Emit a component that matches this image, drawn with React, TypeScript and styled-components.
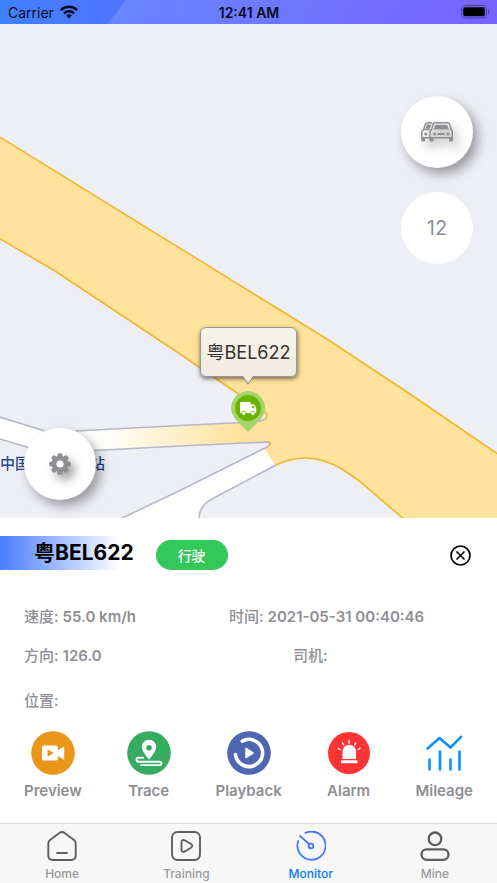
import React from "react";
import styled, { createGlobalStyle } from "styled-components";

const GlobalStyle = createGlobalStyle`
  * { box-sizing: border-box; }
  body {
    margin: 0;
    background: #fff;
    font-family: Inter, "Noto Sans CJK SC", sans-serif;
  }
  button { font: inherit; border: 0; padding: 0; background: none; cursor: pointer; }
  svg { display: block; }
`;

const Screen = styled.div`
  min-height: 100vh;
  display: flex;
  flex-direction: column;
`;

/* ---------- status bar ---------- */

const StatusBar = styled.header`
  height: 24px;
  padding: 0 7px 0 8px;
  display: grid;
  grid-template-columns: 1fr auto 1fr;
  align-items: center;
  background:
    linear-gradient(127deg, transparent 100px, rgba(255, 255, 255, 0.13) 101px, transparent 460px),
    linear-gradient(90deg, #3f80ff, #5472ff 30%, #765fff);
  color: #0b0b1c;
`;

const Carrier = styled.div`
  display: flex;
  align-items: center;
  gap: 6px;
  font-size: 14px;
`;

const Clock = styled.time`
  font-size: 14px;
  font-weight: 600;
`;

const Battery = styled.svg`
  justify-self: end;
`;

/* ---------- map ---------- */

const MapArea = styled.main`
  position: relative;
  flex: 1;
  min-height: 440px;
  overflow: hidden;
  background: #eeeff5;
`;

const MapCanvas = styled.svg`
  position: absolute;
  inset: 0;
  width: 100%;
  height: 100%;
`;

const FloatingStack = styled.div`
  position: absolute;
  top: 72px;
  right: 24px;
  display: flex;
  flex-direction: column;
  gap: 24px;
`;

const RoundButton = styled.button<{ $raised?: boolean }>`
  width: 72px;
  height: 72px;
  border-radius: 50%;
  display: flex;
  align-items: center;
  justify-content: center;
  background: #fff;
  color: #8e8e93;
  font-size: 20px;
  box-shadow: ${(p) => (p.$raised ? "5px 6px 12px rgba(0, 0, 0, 0.36)" : "none")};
  svg {
    filter: drop-shadow(5px 6px 5px rgba(0, 0, 0, 0.36));
  }
`;

const SettingsSlot = styled.div`
  position: absolute;
  left: 24px;
  bottom: 18px;
`;

const VehicleMarker = styled.div`
  position: absolute;
  top: 303px;
  left: 50%;
  transform: translateX(-50%);
  display: flex;
  flex-direction: column;
  align-items: center;
  gap: 5px;
`;

const Callout = styled.div`
  position: relative;
  height: 50px;
  margin-bottom: 9px;
  padding: 0 6px 3px;
  display: flex;
  align-items: center;
  border: 1px solid #98968f;
  border-radius: 6px;
  background: linear-gradient(#f6f3e9, #efebe0);
  box-shadow: 0 2px 4px rgba(0, 0, 0, 0.5);
  color: #333;
  font-size: 18px;
  white-space: nowrap;
`;

const CalloutTip = styled.svg`
  position: absolute;
  top: 100%;
  left: 50%;
  transform: translateX(-50%);
  margin-top: -1px;
`;

/* ---------- vehicle panel ---------- */

const Panel = styled.section`
  padding-top: 18px;
  background: #fff;
`;

const PanelHeader = styled.div`
  height: 38px;
  padding-right: 26px;
  display: flex;
  align-items: center;
`;

const Plate = styled.h1`
  align-self: flex-start;
  margin: 0;
  padding-left: 34px;
  font-size: 21px;
  line-height: 34px;
  font-weight: 700;
  color: #000;
  background: linear-gradient(90deg, #4b7cff, rgba(75, 124, 255, 0)) 0 0 / 120px 100% no-repeat;
`;

const StatusPill = styled.span`
  width: 72px;
  height: 30px;
  margin-left: 22px;
  border-radius: 15px;
  display: flex;
  align-items: center;
  justify-content: center;
  background: #34c759;
  color: #fff;
  font-size: 14px;
  font-weight: 500;
`;

const CloseButton = styled.button`
  margin-left: auto;
`;

const Facts = styled.dl`
  margin: 33px 24px 20px;
  display: grid;
  grid-template-columns: 205px 1fr;
  row-gap: 19px;
`;

const Fact = styled.div<{ $indent?: boolean; $spaced?: boolean }>`
  display: flex;
  gap: 4px;
  padding-left: ${(p) => (p.$indent ? "64px" : "0")};
  padding-top: ${(p) => (p.$spaced ? "6px" : "0")};
  color: #8e8e93;
  font-size: 15px;
  line-height: 20px;
  white-space: nowrap;
  dt { font-weight: 500; }
  dd { margin: 0; font-weight: 600; }
`;

const Actions = styled.div`
  padding: 0 24px 22px;
  display: flex;
  justify-content: space-between;
`;

const ActionButton = styled.button`
  display: flex;
  flex-direction: column;
  align-items: center;
  gap: 6px;
  color: #8e8e93;
  font-size: 15px;
  line-height: 20px;
  font-weight: 600;
`;

/* ---------- tab bar ---------- */

const TabBar = styled.nav`
  height: 60px;
  display: flex;
  border-top: 1px solid #dcdcdc;
  background: #f7f7f7;
`;

const Tab = styled.a<{ $active?: boolean }>`
  flex: 1;
  padding-top: 7px;
  display: flex;
  flex-direction: column;
  align-items: center;
  gap: 5px;
  text-decoration: none;
  color: ${(p) => (p.$active ? "#007aff" : "#999")};
  font-size: 12px;
  line-height: 16px;
  font-weight: 500;
`;

/* ---------- drawings ---------- */

const WifiIcon = () => (
  <svg width="18" height="14" viewBox="0 0 18 14" fill="none" stroke="#08081a" strokeWidth="2.4" aria-hidden="true">
    <path d="M.9 5.1a11.5 11.5 0 0 1 16.2 0" />
    <path d="M4 8.3a7.2 7.2 0 0 1 10 0" />
    <path d="M9 13.4 6.2 10.6a4 4 0 0 1 5.6 0z" fill="#08081a" stroke="none" />
  </svg>
);

const BatteryIcon = () => (
  <Battery width="29" height="14" viewBox="0 0 29 14" aria-label="Battery full">
    <rect x="0.5" y="0.5" width="25" height="12.5" rx="3.5" fill="none" stroke="#4a409b" />
    <rect x="2.2" y="2.2" width="21.6" height="9.1" rx="2" fill="#000" />
    <path d="M27 4.6v4.4c1-.3 1.5-1.2 1.5-2.2S28 4.9 27 4.6z" fill="#4a409b" />
  </Battery>
);

const RoadMap = () => (
  <MapCanvas viewBox="0 24 497 494" preserveAspectRatio="xMidYMid slice" aria-hidden="true">
    <defs>
      <linearGradient id="ramp" gradientUnits="userSpaceOnUse" x1="95" y1="0" x2="240" y2="0">
        <stop offset="0" stopColor="#fff" />
        <stop offset="0.12" stopColor="#fffdf8" />
        <stop offset="1" stopColor="#ffe29b" />
      </linearGradient>
    </defs>
    <path d="M-5 415.5 45 431Q58 434 78 431L270 420V442L95 450Q60 458 30 448L-5 437z" fill="url(#ramp)" />
    <path d="M266 448 180 490 122 518V525H199V514Q199 506 212 499L276 465z" fill="#fff" />
    <path
      d="M-5 134 280 310 330 341 410 394 502 457V523H408L403 518 358 480 342 469Q322 457.5 304 458 290 460 275 465L265 449Q271 445 270 442L240 441V422L262 420Q268 419 267 415L255 405 240 395 180 354 55 271-5 236z"
      fill="#ffe29b"
    />
    <g fill="none" stroke="#b5b8c9" strokeWidth="1.6">
      <path d="M-5 415.5 45 431M76 431 180 425.5 255 422Q262 421 265 419" />
      <path d="M-5 437.5 30 448M94 450.5 180 446 268 442Q271 444 268 446.5L180 490.5 120 519" />
      <path d="M276 465 212 499Q199 506 199 519" />
    </g>
    <g fill="none" stroke="#f0b52f" strokeWidth="1.6">
      <path d="M-5 134 280 310 330 341 410 394 502 457" />
      <path d="M-5 236 55 271 180 354 240 395 264 411Q269 415 265 419.5" />
      <path d="M268 442Q272 442 269 446" />
      <path d="M276 465Q290 458.5 304 458 322 457.5 342 469L358 480 405 520" />
    </g>
    <text x="0" y="469" fontSize="15" fontWeight="500" fill="#24458f" stroke="#fff" strokeWidth="1" paintOrder="stroke">
      中国石化加油站
    </text>
  </MapCanvas>
);

const CarsIcon = () => (
  <svg width="32" height="20" viewBox="0 0 32 20" fill="none" stroke="#8e8e93" strokeWidth="1.5" aria-hidden="true">
    <path d="M11.5.8H6.5Q4.8.8 4.2 2.5L2.6 7.600Q.8 8.6.8 10.5V15.8H9.200M3 7.6H8.8" />
    <path d="M5.8 2.6H10.3L8.7 6.8H4.4z" fill="#8e8e93" stroke="none" />
    <circle cx="4.7" cy="12" r="1.5" fill="#8e8e93" stroke="none" />
    <path d="M.2 16h3.800v2.600q0 1-1 1H1.200q-1 0-1-1z" fill="#8e8e93" stroke="none" />
    <path d="M14 .8H26.4Q28.1.8 28.7 2.5L30.2 7.6Q31.3 8.6 31.300 10.500V15.8H9V10.500Q9 8.6 10.600 7.6L12 2.500Q12.5.8 14 .8z" />
    <path d="M14.300 2.700H26.200L27.900 7.500H12.600z" fill="#8e8e93" stroke="none" />
    <circle cx="13.500" cy="12" r="1.5" fill="#8e8e93" stroke="none" />
    <circle cx="27" cy="12" r="1.5" fill="#8e8e93" stroke="none" />
    <rect x="16.4" y="11" width="7.4" height="2" rx="1" fill="#8e8e93" stroke="none" />
    <path d="M8.500 16h4v2.600q0 1-1 1h-2q-1 0-1-1zM28 16h4v2.600q0 1-1 1h-2q-1 0-1-1z" fill="#8e8e93" stroke="none" />
  </svg>
);

const GearIcon = () => (
  <svg width="22" height="22" viewBox="-11 -11 22 22" aria-hidden="true">
    <g fill="#8e8e93">
      {[0, 45, 90, 135].map((a) => (
        <rect key={a} x="-2.4" y="-10.7" width="4.8" height="21.4" rx="1.5" transform={`rotate(${a})`} />
      ))}
      <circle r="8.3" />
    </g>
    <circle r="3.6" fill="#fff" />
  </svg>
);

const TruckPin = () => (
  <svg width="34" height="41" viewBox="0 0 34 41" aria-hidden="true">
    <path d="M17 0a17 17 0 0 1 12.5 28.5L17 41 4.5 28.5A17 17 0 0 1 17 0z" fill="#a5d46a" />
    <circle cx="17" cy="17" r="13" fill="#6ab400" />
    <path
      d="M10 11h8.8q1 0 1 1v1.300h2.400q.6 0 1 .5l1.500 2.400q.5.6.5 1.300v3.800q0 .8-.8.8H9.800q-.8 0-.8-.8V12q0-1 1-1z"
      fill="#fff"
    />
    <path d="M21 14.600h1.200l1.500 2.600H21z" fill="#6ab400" />
    <g fill="#fff" stroke="#6ab400" strokeWidth="0.8">
      <circle cx="12.8" cy="22.3" r="2.1" />
      <circle cx="21.8" cy="22.3" r="2.1" />
    </g>
  </svg>
);

const CloseIcon = () => (
  <svg width="21" height="21" viewBox="0 0 21 21" fill="none" stroke="#000" strokeWidth="1.7" strokeLinecap="round" aria-hidden="true">
    <circle cx="10.5" cy="10.5" r="9.5" />
    <path d="m7 7 7 7M14 7l-7 7" />
  </svg>
);

const PreviewIcon = () => (
  <svg width="44" height="44" viewBox="0 0 44 44" aria-hidden="true">
    <circle cx="22" cy="22" r="21.8" fill="#ea961a" />
    <path d="M13 14.5H25q2 0 2 2v2.800l5.500-3.500q.7-.3.7.5V28q0 .8-.7.5L27 25v2.600q0 2-2 2H13q-2 0-2-2V16.500q0-2 2-2z" fill="#fff" />
    <path d="M17 19v6l5-3z" fill="#ea961a" stroke="#ea961a" strokeWidth="1" strokeLinejoin="round" />
  </svg>
);

const TraceIcon = () => (
  <svg width="44" height="44" viewBox="0 0 44 44" aria-hidden="true">
    <circle cx="22" cy="22" r="21.8" fill="#36ac60" />
    <path d="M22 28.500Q14.700 20 14.700 16a7.300 7.300 0 0 1 14.600 0Q29.300 20 22 28.500z" fill="#fff" />
    <circle cx="22" cy="16.8" r="2.8" fill="#36ac60" />
    <path d="M16 26.800H11.500a2 2 0 0 0 0 4H33q1.500.3 1.500 1.700T33 34.100H14" fill="none" stroke="#fff" strokeWidth="1.900" strokeLinecap="round" />
  </svg>
);

const PlaybackIcon = () => (
  <svg width="44" height="44" viewBox="0 0 44 44" aria-hidden="true">
    <circle cx="22" cy="22" r="21.8" fill="#4f67b0" />
    <path d="M15.200 10.200A13.600 13.600 0 1 1 8.500 23.500" fill="none" stroke="#fff" strokeWidth="3.600" strokeLinecap="round" />
    <path d="M19 17.500v9l7-4.500z" fill="#fff" stroke="#fff" strokeWidth="1.500" strokeLinejoin="round" />
  </svg>
);

const AlarmIcon = () => (
  <svg width="44" height="44" viewBox="0 0 44 44" aria-hidden="true">
    <circle cx="22" cy="22" r="21" fill="#fd3334" />
    <path d="M15.500 28V20.500a6.500 6.500 0 0 1 13.500 0V28z" fill="#fff" />
    <rect x="14" y="29.300" width="16.500" height="2.900" rx=".6" fill="#fff" />
    <path d="m11.300 17.300 1.800 1.200M15.500 12l1.200 1.800M22 9.600V12M28.800 12l-1.200 1.800M33 17.300l-1.800 1.200" stroke="#fff" strokeWidth="1.400" strokeLinecap="round" />
  </svg>
);

const MileageIcon = () => (
  <svg width="44" height="44" viewBox="0 0 44 44" fill="none" stroke="#0a92fa" strokeWidth="2.6" strokeLinecap="round" aria-hidden="true">
    <path d="M5.500 17.500 17.500 7 28.500 16.500 39 5.800" strokeLinejoin="round" />
    <path d="M7.500 28.500V38.500M18 20.500v18M28.500 28.500v10M37.500 20.500v18" />
  </svg>
);

const HomeIcon = () => (
  <svg width="30" height="30" viewBox="0 0 30 30" fill="none" stroke="#5f5f5f" strokeWidth="1.9" strokeLinecap="round" aria-hidden="true">
    <path d="M13 1.600q2-1.300 4 0L27 9q1.700 1.400 1.700 3.500V24.500q0 4.500-4.500 4.500H5.800q-4.500 0-4.500-4.500V12.500Q1.300 10.400 3 9z" />
    <path d="M10 22h10" />
  </svg>
);

const TrainingIcon = () => (
  <svg width="30" height="30" viewBox="0 0 30 30" fill="none" stroke="#5f5f5f" strokeWidth="1.9" strokeLinejoin="round" aria-hidden="true">
    <rect x="1" y="1" width="28" height="28" rx="5.500" />
    <path d="M10.500 11.500q0-3.500 3.200-2.200L20 13q2.500 1.800 0 3.700L13.700 20.500q-3.200 1.300-3.200-2z" />
  </svg>
);

const MonitorIcon = () => (
  <svg width="30" height="30" viewBox="0 0 30 30" fill="none" stroke="#4477f5" strokeWidth="1.8" strokeLinecap="round" aria-hidden="true">
    <path d="M9.500 1.900A14.100 14.100 0 1 1 2.200 10" />
    <path d="M4 4.800 13 13" />
    <circle cx="15" cy="15" r="2.3" />
  </svg>
);

const MineIcon = () => (
  <svg width="30" height="30" viewBox="0 0 30 30" fill="none" stroke="#5f5f5f" strokeWidth="2.3" aria-hidden="true">
    <circle cx="15" cy="7.8" r="6.3" />
    <rect x="1.5" y="18.3" width="27" height="10.5" rx="5.2" />
  </svg>
);

const actions = [
  { label: "Preview", icon: <PreviewIcon /> },
  { label: "Trace", icon: <TraceIcon /> },
  { label: "Playback", icon: <PlaybackIcon /> },
  { label: "Alarm", icon: <AlarmIcon /> },
  { label: "Mileage", icon: <MileageIcon /> },
];

const tabs = [
  { label: "Home", icon: <HomeIcon /> },
  { label: "Training", icon: <TrainingIcon /> },
  { label: "Monitor", icon: <MonitorIcon />, active: true },
  { label: "Mine", icon: <MineIcon /> },
];

export default function App() {
  return (
    <>
      <GlobalStyle />
      <Screen>
        <StatusBar>
          <Carrier>
            Carrier <WifiIcon />
          </Carrier>
          <Clock>12:41 AM</Clock>
          <BatteryIcon />
        </StatusBar>

        <MapArea>
          <RoadMap />
          <VehicleMarker>
            <Callout>
              粤BEL622
              <CalloutTip width="12" height="10" viewBox="0 0 12 10" aria-hidden="true">
                <path d="M0 0 6 9.5 12 0z" fill="#efebe0" />
                <path d="M.5 1 6 9.3 11.5 1" fill="none" stroke="#85837c" />
              </CalloutTip>
            </Callout>
            <TruckPin />
          </VehicleMarker>
          <FloatingStack>
            <RoundButton $raised aria-label="Vehicles">
              <CarsIcon />
            </RoundButton>
            <RoundButton>12</RoundButton>
          </FloatingStack>
          <SettingsSlot>
            <RoundButton $raised aria-label="Settings">
              <GearIcon />
            </RoundButton>
          </SettingsSlot>
        </MapArea>

        <Panel>
          <PanelHeader>
            <Plate>粤BEL622</Plate>
            <StatusPill>行驶</StatusPill>
            <CloseButton aria-label="Close">
              <CloseIcon />
            </CloseButton>
          </PanelHeader>
          <Facts>
            <Fact>
              <dt>速度:</dt>
              <dd>55.0 km/h</dd>
            </Fact>
            <Fact>
              <dt>时间:</dt>
              <dd>2021-05-31 00:40:46</dd>
            </Fact>
            <Fact>
              <dt>方向:</dt>
              <dd>126.0</dd>
            </Fact>
            <Fact $indent>
              <dt>司机:</dt>
              <dd />
            </Fact>
            <Fact $spaced>
              <dt>位置:</dt>
              <dd />
            </Fact>
          </Facts>
          <Actions>
            {actions.map((a) => (
              <ActionButton key={a.label}>
                {a.icon}
                {a.label}
              </ActionButton>
            ))}
          </Actions>
        </Panel>

        <TabBar>
          {tabs.map((t) => (
            <Tab key={t.label} href="#" $active={t.active} aria-current={t.active ? "page" : undefined}>
              {t.icon}
              {t.label}
            </Tab>
          ))}
        </TabBar>
      </Screen>
    </>
  );
}
